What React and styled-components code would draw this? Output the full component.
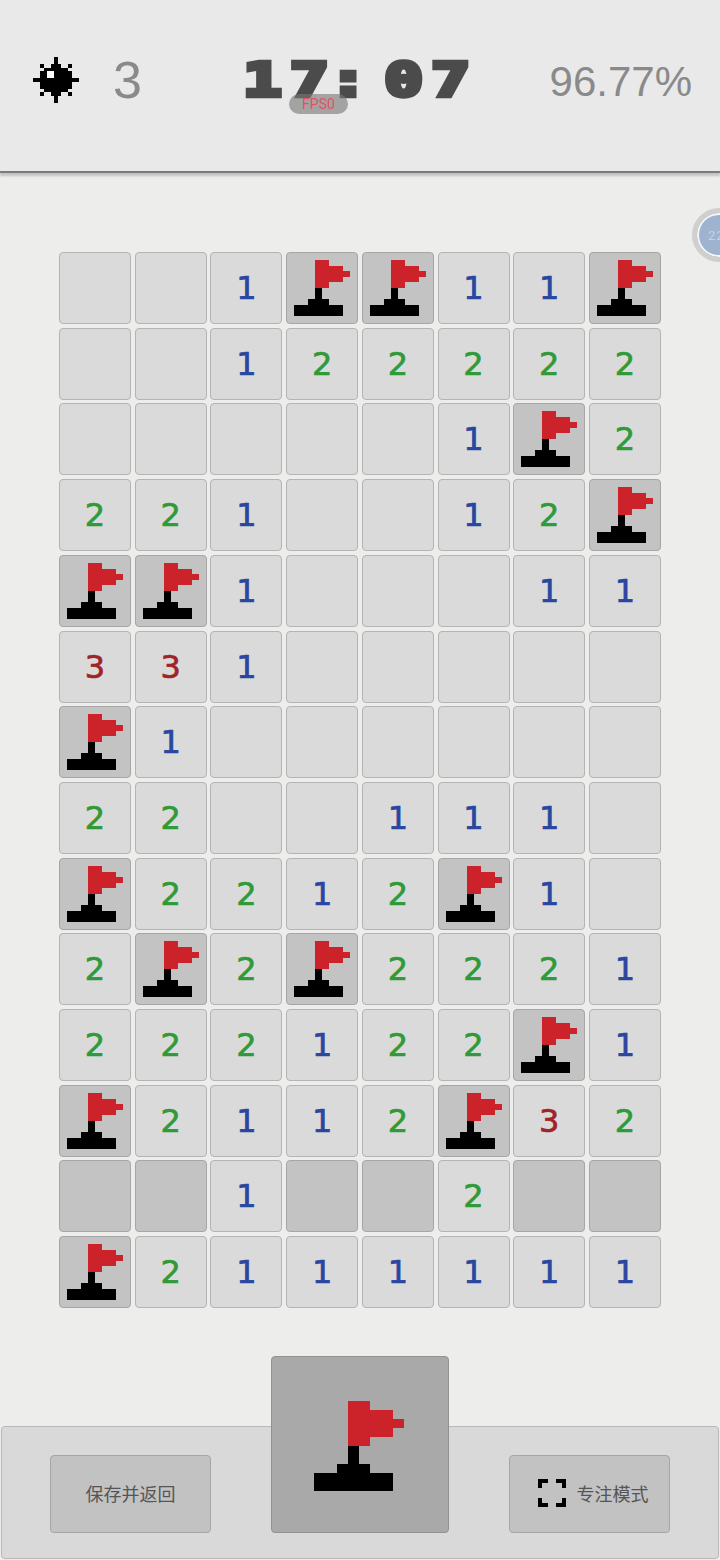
import React from 'react';
import styled, { createGlobalStyle } from 'styled-components';

const GlobalStyle = createGlobalStyle`
  html, body {
    margin: 0;
    padding: 0;
    background: #ededeb;
  }
`;

const Page = styled.div`
  position: relative;
  display: flex;
  flex-direction: column;
  width: 720px;
  height: 1560px;
  overflow: hidden;
  background: #ededeb;
  font-family: 'Roboto', 'Noto Sans CJK SC', sans-serif;
`;

const Header = styled.header`
  position: relative;
  display: flex;
  align-items: center;
  flex: none;
  box-sizing: border-box;
  height: 173px;
  padding: 0 28px 12px 33px;
  background: #e9e9e9;
  border-bottom: 2px solid #7b7b7b;
  box-shadow: 0 3px 2px #c4c4c4;
`;

const MineCount = styled.div`
  display: flex;
  align-items: center;
  gap: 34px;
  width: 210px;
  font-family: 'Liberation Sans', sans-serif;
  font-size: 52px;
  line-height: 60px;
  color: #8a8a8a;
`;

const Clock = styled.div`
  width: 272px;
  font-family: 'DejaVu Sans Mono', monospace;
  font-weight: 700;
  font-size: 46px;
  line-height: 60px;
  letter-spacing: 5.9px;
  white-space: nowrap;
  color: #4b4b4b;
  -webkit-text-stroke: 4.5px #4b4b4b;
  transform: scaleX(1.4);
  transform-origin: left center;
`;

const ClockColon = styled.span`
  display: inline-block;
  margin: 0 6px 0 -6px;
`;

const Percent = styled.div`
  margin: 4px 0 0 auto;
  font-family: 'Liberation Sans', sans-serif;
  font-size: 42px;
  line-height: 60px;
  color: #8a8a8a;
`;

const FpsPill = styled.div`
  position: absolute;
  left: 289px;
  top: 94px;
  width: 59px;
  height: 20px;
  border-radius: 10px;
  background: rgba(120, 120, 120, 0.62);
  color: #e2525f;
  font-size: 14px;
  line-height: 20px;
  text-align: center;
`;

const Floater = styled.div`
  position: absolute;
  left: 692px;
  top: 208px;
  display: flex;
  align-items: center;
  box-sizing: border-box;
  width: 54px;
  height: 54px;
  padding-left: 11px;
  border-radius: 50%;
  border: 5px solid #cfcfcd;
  box-shadow: inset 0 0 0 2px #f4f6f8;
  background: #9db3d0;
  color: #c6d3e4;
  font-size: 13px;
  letter-spacing: 1px;
`;

const Board = styled.main`
  display: grid;
  grid-template-columns: repeat(8, 72px);
  grid-auto-rows: 72px;
  gap: 3.71px;
  width: 602px;
  margin: 79px auto 0;
`;

const Cell = styled.div`
  display: flex;
  align-items: center;
  justify-content: center;
  box-sizing: border-box;
  border-radius: 4px;
  border: 1px solid ${(p) => (p.$covered ? '#a6a6a6' : '#b4b4b4')};
  background: ${(p) => (p.$covered ? '#c3c3c3' : '#dadada')};
  font-family: 'DejaVu Sans', sans-serif;
  font-size: 32px;
  color: ${(p) => p.$color};
  -webkit-text-stroke: 0.7px ${(p) => p.$color || 'transparent'};
`;

const BottomBar = styled.footer`
  display: flex;
  align-items: flex-end;
  justify-content: space-between;
  box-sizing: border-box;
  height: 133px;
  margin: auto 1px 1px;
  padding: 0 48px 25px;
  border: 1px solid #b8b8b8;
  border-radius: 4px;
  background: #d9d9d9;
`;

const ActionButton = styled.button`
  display: flex;
  align-items: center;
  justify-content: center;
  gap: 11px;
  box-sizing: border-box;
  width: 161px;
  height: 78px;
  padding: 0 0 2px ${(p) => (p.$withIcon ? 7 : 0)}px;
  border: 1px solid #a6a6a6;
  border-radius: 4px;
  background: #c2c2c2;
  color: #555;
  font-family: 'Noto Sans CJK SC', sans-serif;
  font-size: 18px;
`;

const ModeButton = styled.button`
  display: flex;
  align-items: center;
  justify-content: center;
  box-sizing: border-box;
  width: 178px;
  height: 177px;
  padding: 2px 2px 0 0;
  border: 1px solid #929292;
  border-radius: 4px;
  background: #a9a9a9;
`;

const FLAG_RED = [
  [3, 0, 2, 5],
  [5, 1, 2, 3],
  [7, 2, 1, 1],
];
const FLAG_BLACK = [
  [3, 5, 1, 2],
  [2, 7, 3, 1],
  [0, 8, 7, 2],
];

const FlagIcon = ({ size }) => (
  <svg width={size} height={size} viewBox="0 0 8 10" preserveAspectRatio="none" shapeRendering="crispEdges">
    {FLAG_RED.map(([x, y, w, h]) => (
      <rect key={`${x}-${y}`} x={x} y={y} width={w} height={h} fill="#cc2229" />
    ))}
    {FLAG_BLACK.map(([x, y, w, h]) => (
      <rect key={`${x}-${y}`} x={x} y={y} width={w} height={h} fill="#000" />
    ))}
  </svg>
);

// spans per row of the mine sprite, offsets from the centre
const MINE_ROWS = [
  [[0, 0]],
  [[0, 0]],
  [[-4, -4], [-1, 1], [4, 4]],
  [[-3, 3]],
  [[-4, 4]],
  [[-4, 4]],
  [[-6, 6]],
  [[-4, 4]],
  [[-4, 4]],
  [[-3, 3]],
  [[-4, -4], [-1, 1], [4, 4]],
  [[0, 0]],
  [[0, 0]],
];

const MineIcon = () => (
  <svg width="46" height="46" viewBox="0 0 13 13" shapeRendering="crispEdges">
    {MINE_ROWS.flatMap((spans, row) =>
      spans.map(([a, b]) => (
        <rect key={`${row}-${a}`} x={a + 6} y={row} width={b - a + 1} height="1" fill="#000" />
      ))
    )}
    <rect x="4" y="4" width="2" height="2" fill="#fff" />
  </svg>
);

const FocusIcon = () => (
  <svg width="28" height="28" viewBox="0 0 28 28" fill="none" stroke="#000" strokeWidth="3.5" shapeRendering="crispEdges">
    <path d="M2 9V2H10M18 2H26V9M26 19V26H18M10 26H2V19" />
  </svg>
);

const NUMBER_COLORS = { 1: '#2a47a0', 2: '#2f9a37', 3: '#a02327' };

// . empty, F flag, H covered
const BOARD = [
  '..1FF11F',
  '..122222',
  '.....1F2',
  '221..12F',
  'FF1...11',
  '331.....',
  'F1......',
  '22..111.',
  'F2212F1.',
  '2F2F2221',
  '222122F1',
  'F2112F32',
  'HH1HH2HH',
  'F2111111',
];

const App = () => (
  <Page>
    <GlobalStyle />
    <Header>
      <MineCount>
        <MineIcon />
        <span>3</span>
      </MineCount>
      <Clock>
        17<ClockColon>:</ClockColon>07
      </Clock>
      <Percent>96.77%</Percent>
      <FpsPill>FPS0</FpsPill>
    </Header>
    <Floater>22</Floater>
    <Board>
      {BOARD.flatMap((row, r) =>
        row.split('').map((value, c) => {
          const flagged = value === 'F';
          const covered = flagged || value === 'H';
          return (
            <Cell key={`${r}-${c}`} $covered={covered} $color={NUMBER_COLORS[value]}>
              {flagged && <FlagIcon size={56} />}
              {NUMBER_COLORS[value] && value}
            </Cell>
          );
        })
      )}
    </Board>
    <BottomBar>
      <ActionButton>保存并返回</ActionButton>
      <ModeButton>
        <FlagIcon size={90} />
      </ModeButton>
      <ActionButton $withIcon>
        <FocusIcon />
        专注模式
      </ActionButton>
    </BottomBar>
  </Page>
);

export default App;
